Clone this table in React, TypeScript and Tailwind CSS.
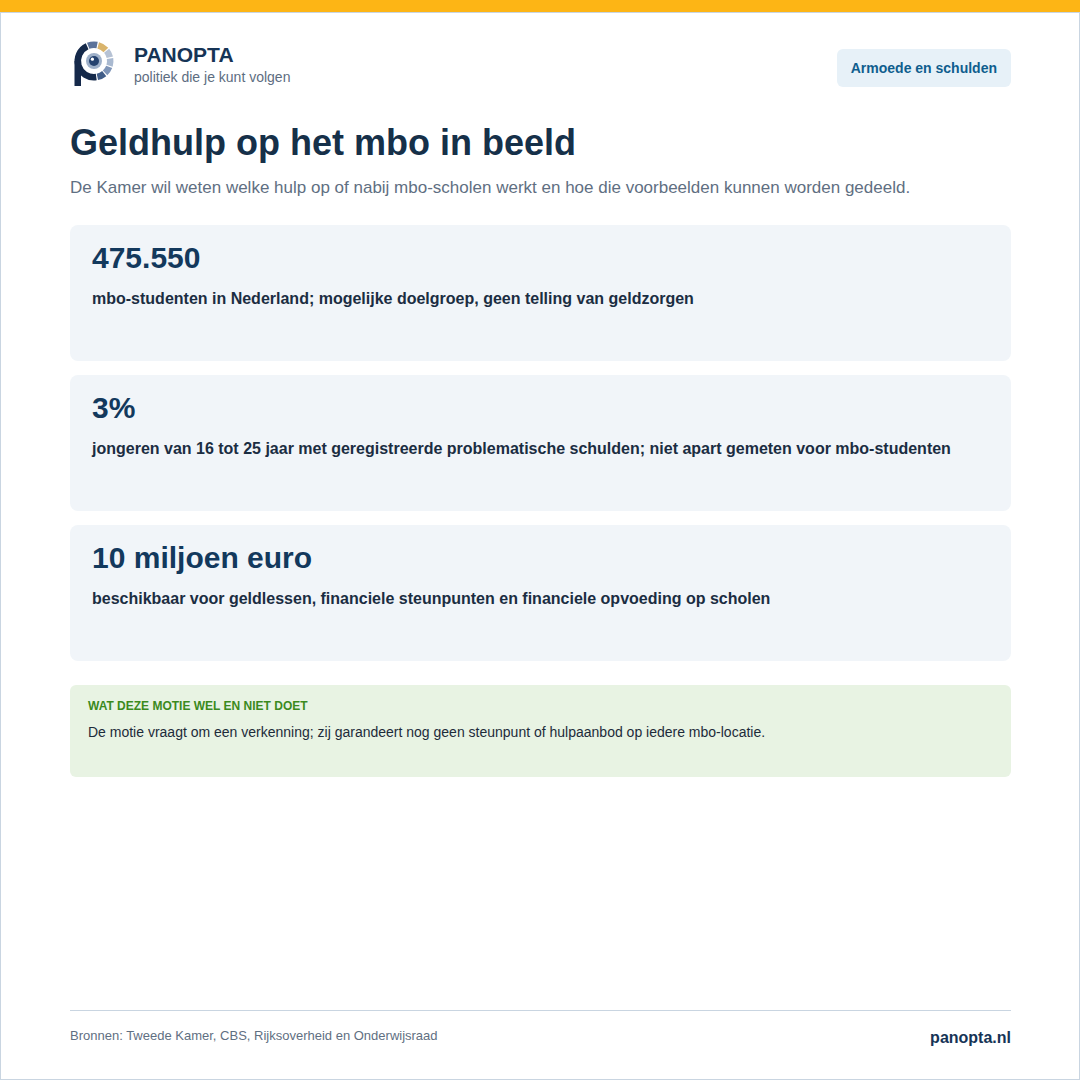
import React from 'react'

type Stat = {
  value: string
  label: string
}

const stats: Stat[] = [
  { value: '475.550', label: 'mbo-studenten in Nederland; mogelijke doelgroep, geen telling van geldzorgen' },
  { value: '3%', label: 'jongeren van 16 tot 25 jaar met geregistreerde problematische schulden; niet apart gemeten voor mbo-studenten' },
  { value: '10 miljoen euro', label: 'beschikbaar voor geldlessen, financiele steunpunten en financiele opvoeding op scholen' },
]

// annular sector, angles in degrees, clockwise on screen
const sector = (cx: number, cy: number, r1: number, r2: number, a1: number, a2: number) => {
  const rad = (a: number) => (a * Math.PI) / 180
  const p = (r: number, a: number) => `${(cx + r * Math.cos(rad(a))).toFixed(2)} ${(cy + r * Math.sin(rad(a))).toFixed(2)}`
  const large = a2 - a1 > 180 ? 1 : 0
  return `M ${p(r2, a1)} A ${r2} ${r2} 0 ${large} 1 ${p(r2, a2)} L ${p(r1, a2)} A ${r1} ${r1} 0 ${large} 0 ${p(r1, a1)} Z`
}

function Logo() {
  const cx = 24
  const cy = 21
  const segments = [
    { a1: 249, a2: 281, color: '#5b7299' },
    { a1: 285, a2: 317, color: '#d9b46c' },
    { a1: 321, a2: 347, color: '#b6c2d4' },
    { a1: 351, a2: 377, color: '#a9b9d0' },
    { a1: 21, a2: 47, color: '#7f95b8' },
    { a1: 51, a2: 78, color: '#415d88' },
  ]
  return (
    <svg width="48" height="48" viewBox="0 0 48 48">
      {/* P: stem + bowl */}
      <path d={sector(cx, cy, 13, 19.5, 82, 245)} fill="#15294a" />
      <rect x="4.5" y="21" width="6.5" height="25" fill="#15294a" />
      {segments.map((s, i) => (
        <path key={i} d={sector(cx, cy, 13, 19.5, s.a1, s.a2)} fill={s.color} />
      ))}
      <circle cx={cx} cy={cy} r="8" fill="#9eb0c9" />
      <circle cx={cx} cy={cy} r="5" fill="#25426f" />
      <circle cx={cx - 1.6} cy={cy - 1.8} r="1.6" fill="#ffffff" />
    </svg>
  )
}

export default function App() {
  return (
    <div className="w-[1080px] h-[1080px] bg-white font-['Liberation_Sans',Arial,sans-serif]">
      <div className="h-[12px] bg-[#fdb515]" />
      <div className="h-[1068px] border border-[#c9d5e1] flex flex-col pl-[69px] pr-[68px]">
        <header className="flex justify-between items-start pt-[27px]">
          <div className="flex items-start">
            <div className="w-[48px] h-[48px]">
              <Logo />
            </div>
            <div className="ml-[16px] mt-[3px]">
              <div className="text-[21px] leading-[24px] font-bold text-[#163456]">PANOPTA</div>
              <div className="text-[14px] leading-[20px] text-[#5d6d81]">politiek die je kunt volgen</div>
            </div>
          </div>
          <div className="mt-[9px] h-[38px] px-[14px] flex items-center rounded-md bg-[#e7f1f8] text-[14px] font-bold text-[#0f5e8e]">
            Armoede en schulden
          </div>
        </header>

        <main>
          <h1 className="mt-[33px] text-[36px] leading-[43px] font-bold text-[#163049]">Geldhulp op het mbo in beeld</h1>
          <p className="mt-[11px] text-[17px] leading-[25px] text-[#5f6f82]">
            De Kamer wil weten welke hulp op of nabij mbo-scholen werkt en hoe die voorbeelden kunnen worden gedeeld.
          </p>

          <div className="mt-[25px] flex flex-col gap-[14px]">
            {stats.map((s) => (
              <div key={s.value} className="h-[136px] rounded-lg bg-[#f1f5f9] px-[22px] pt-[15px]">
                <div className="text-[30px] leading-[36px] font-bold text-[#13395d]">{s.value}</div>
                <div className="mt-[11px] text-[16px] leading-[24px] font-bold text-[#1b2d42]">{s.label}</div>
              </div>
            ))}
          </div>

          <div className="mt-[24px] h-[92px] rounded-md bg-[#e8f3e3] px-[18px] pt-[13px]">
            <div className="text-[12px] leading-[16px] font-bold uppercase text-[#3b8a1d]">Wat deze motie wel en niet doet</div>
            <div className="mt-[8px] text-[14px] leading-[20px] text-[#1d2b3a]">
              De motie vraagt om een verkenning; zij garandeert nog geen steunpunt of hulpaanbod op iedere mbo-locatie.
            </div>
          </div>
        </main>

        <footer className="mt-auto border-t border-[#c9d5e1] pt-[16px] pb-[30px] flex justify-between items-start">
          <div className="text-[13px] leading-[18px] text-[#5f6f82]">Bronnen: Tweede Kamer, CBS, Rijksoverheid en Onderwijsraad</div>
          <div className="text-[16px] leading-[22px] font-bold text-[#163456]">panopta.nl</div>
        </footer>
      </div>
    </div>
  )
}
